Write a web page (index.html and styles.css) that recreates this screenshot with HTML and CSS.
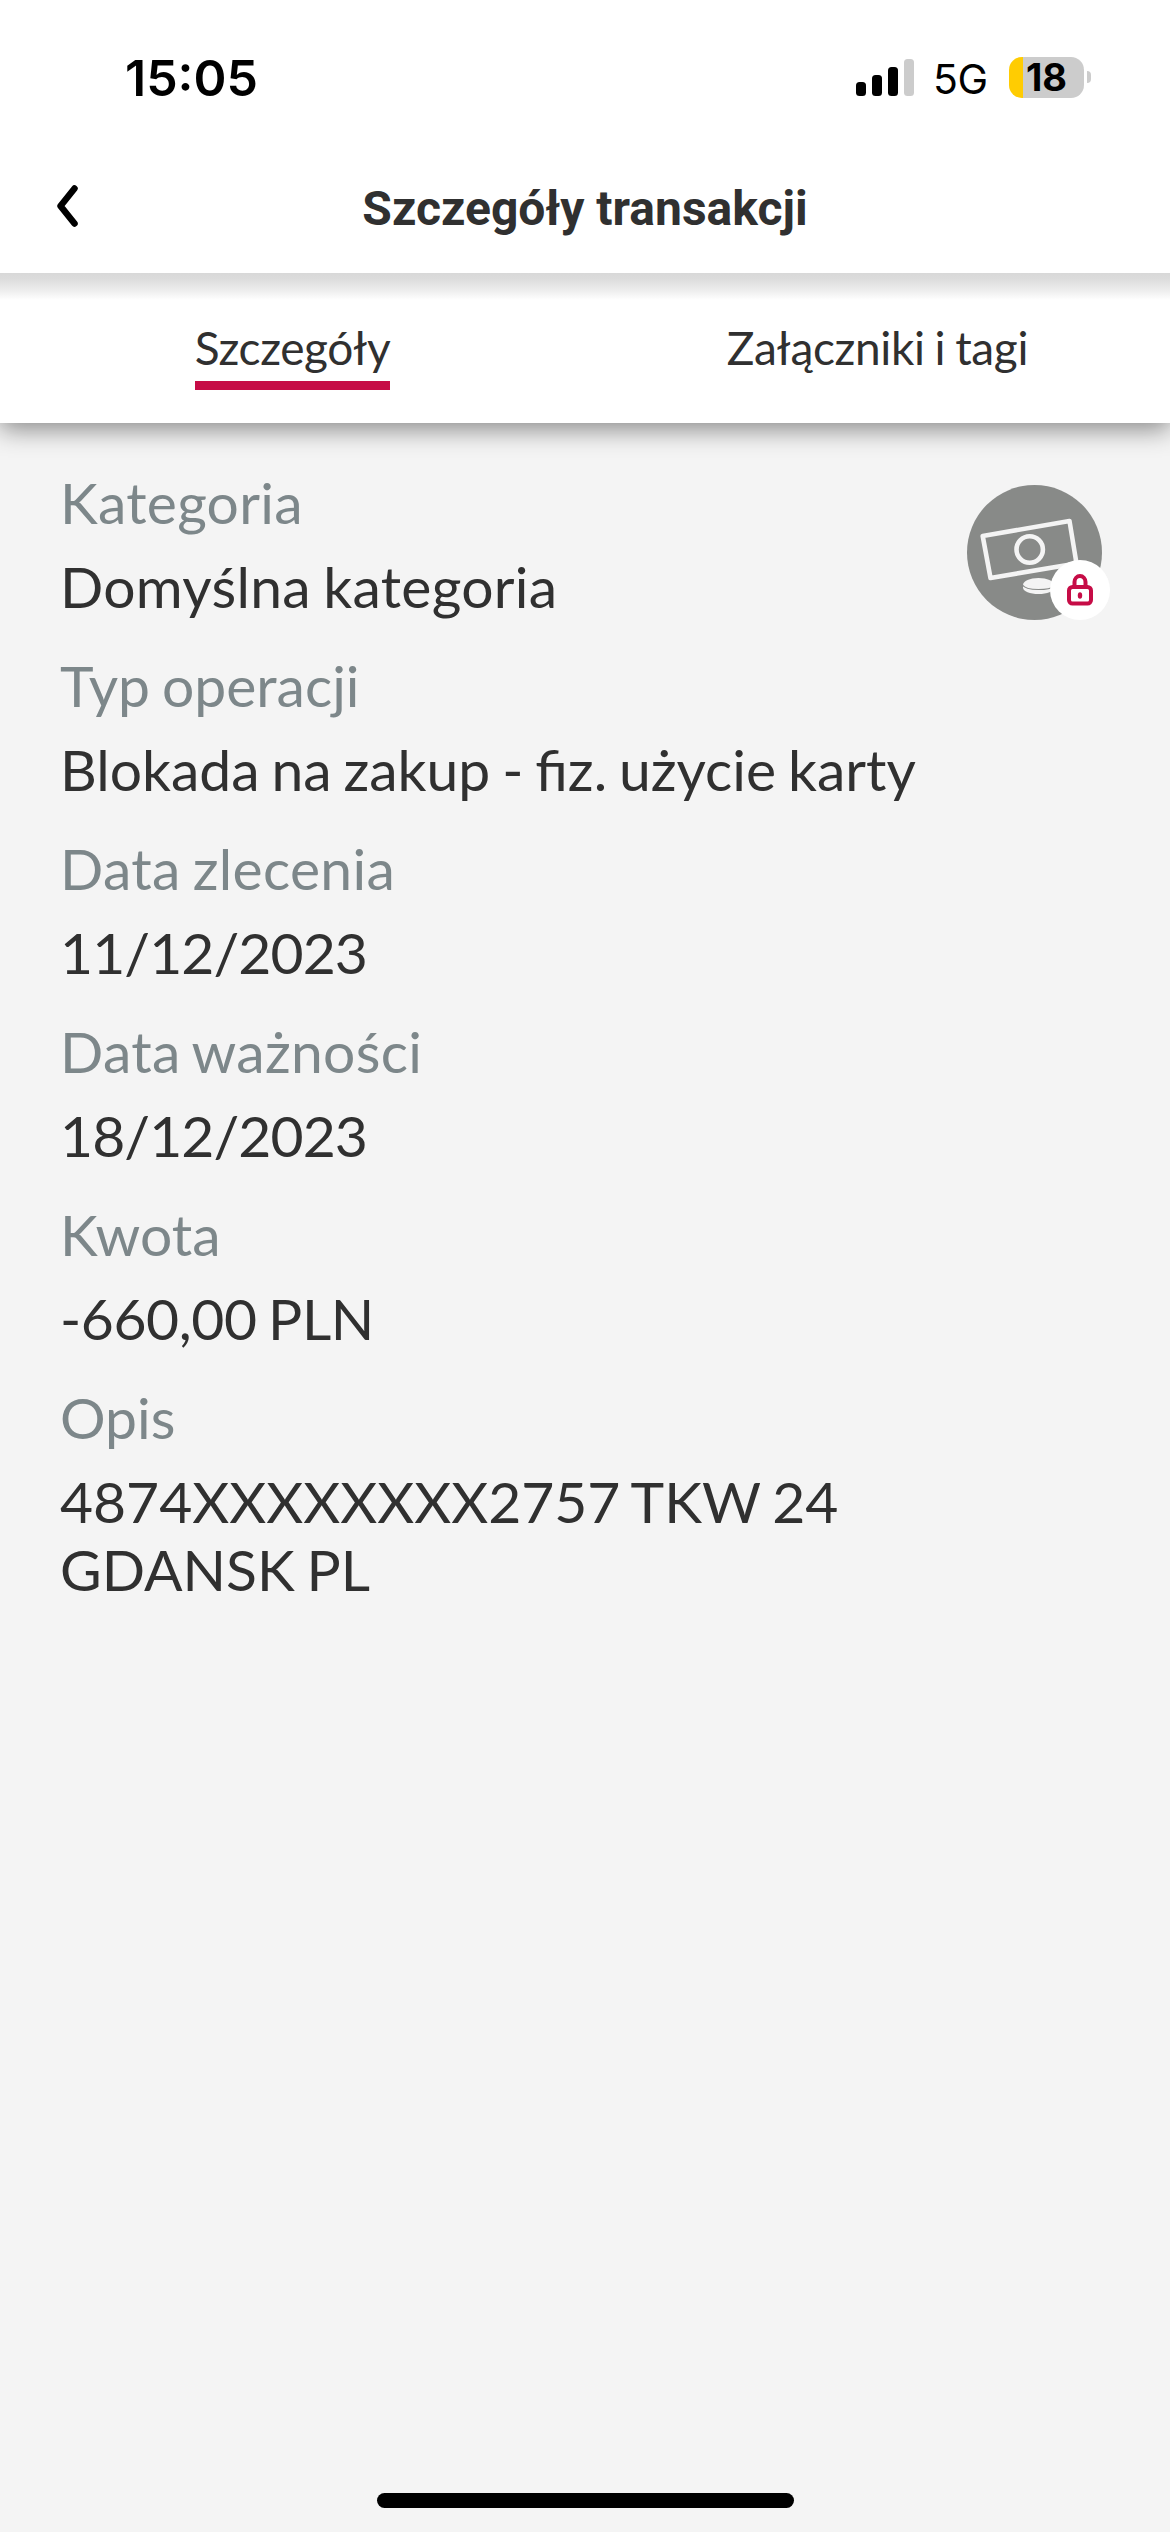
FILE: index.html
```html
<!DOCTYPE html>
<html lang="pl">
<head>
<meta charset="utf-8">
<title>Szczegóły transakcji</title>
<link rel="stylesheet" href="styles.css">
</head>
<body>
<div class="status-bar">
  <span class="time">15:05</span>
  <div class="indicators">
    <svg class="signal" width="58" height="37" viewBox="0 0 58 37">
      <rect x="0" y="23" width="10" height="14" rx="3.5"/>
      <rect x="16" y="16" width="10" height="21" rx="3.5"/>
      <rect x="32" y="8" width="10" height="29" rx="3.5"/>
      <rect x="48" y="0" width="10" height="37" rx="3.5" fill="#ccc"/>
    </svg>
    <span class="network">5G</span>
    <div class="battery"><span class="battery-level">18</span></div>
    <span class="battery-tip"></span>
  </div>
</div>
<header class="header">
  <svg class="back" width="24" height="44" viewBox="0 0 24 44">
    <path d="M19.5 4.5 5.5 22l14 17.500" fill="none" stroke="#000" stroke-width="6.500" stroke-linecap="round" stroke-linejoin="round"/>
  </svg>
  <h1 class="title">Szczegóły transakcji</h1>
</header>
<nav class="tabs">
  <div class="tab"><span class="tab-label active">Szczegóły</span></div>
  <div class="tab"><span class="tab-label">Załączniki i tagi</span></div>
</nav>
<main class="content">
  <dl class="details">
    <div class="row"><dt class="loose">Kategoria</dt><dd class="loose">Domyślna kategoria</dd></div>
    <div class="row"><dt>Typ operacji</dt><dd>Blokada na zakup - fiz. użycie karty</dd></div>
    <div class="row"><dt class="loose">Data zlecenia</dt><dd class="numeric">11/12/2023</dd></div>
    <div class="row"><dt class="loose">Data ważności</dt><dd class="numeric">18/12/2023</dd></div>
    <div class="row"><dt>Kwota</dt><dd class="amount">-660,00 PLN</dd></div>
    <div class="row"><dt>Opis</dt><dd>4874XXXXXXXX2757 TKW 24 GDANSK PL</dd></div>
  </dl>
  <svg class="category" width="143" height="135" viewBox="0 0 143 135">
    <circle cx="67.500" cy="67.500" r="67.500" fill="#888a88"/>
    <g fill="none" stroke="#f4f4f4" stroke-width="4.600" stroke-linejoin="round">
      <path d="M15.700 51 102.500 36l7 42.500L23.500 93z"/>
      <circle cx="62.700" cy="64.500" r="13.200"/>
    </g>
    <path d="M56 100c0-4 7-7 15.500-7S87 96 87 100v2.500c0 4-7 6.500-15.500 6.500S56 106.500 56 102.500z" fill="#f4f4f4"/>
    <path d="M55.500 100c2 3.500 8 4.500 16 4.500s13-1 16-3" fill="none" stroke="#888a88" stroke-width="1.200"/>
    <circle cx="113" cy="105" r="30" fill="#fff"/>
    <g fill="none" stroke="#c60c46" stroke-width="4">
      <rect x="102" y="102" width="22" height="16.500" rx="3.500"/>
      <path d="M107.500 102v-5a5.500 6 0 0 1 11 0v5"/>
    </g>
    <ellipse cx="113" cy="110.500" rx="2.200" ry="3.200" fill="#c60c46"/>
  </svg>
</main>
<footer class="home"><span class="home-indicator"></span></footer>
</body>
</html>
```
FILE: styles.css
```css
* { box-sizing: border-box; }
body {
  margin: 0;
  width: 1170px;
  height: 2532px;
  display: flex;
  flex-direction: column;
  background: #f4f4f4;
  color: #303030;
  font-family: Lato, "Open Sans", sans-serif;
}
.status-bar {
  height: 141px;
  padding: 0 79px 0 125px;
  display: flex;
  justify-content: space-between;
  background: #fff;
  color: #000;
  font-family: Inter, sans-serif;
}
.time {
  margin-top: 48px;
  font-size: 50px;
  line-height: 60px;
  font-weight: 600;
}
.indicators { display: flex; align-items: flex-start; }
.signal { margin-top: 59px; }
.network {
  width: 95px;
  padding-left: 19px;
  margin-top: 54px;
  font-size: 41px;
  line-height: 50px;
  letter-spacing: -0.5px;
}
.battery {
  width: 75px;
  height: 41px;
  margin-top: 57px;
  border-radius: 13px;
  background: linear-gradient(90deg, #ffcc02 14px, #ccc 14px);
  text-align: center;
}
.battery-level {
  display: block;
  font-size: 38px;
  line-height: 41px;
  font-weight: 700;
}
.battery-tip {
  width: 4px;
  height: 12px;
  margin: 71px 0 0 3px;
  border-radius: 0 4px 4px 0;
  background: #ccc;
}
.header {
  position: relative;
  z-index: 1;
  height: 132px;
  padding: 0 55px;
  display: grid;
  grid-template-columns: 24px 1fr 24px;
  align-items: start;
  background: #fff;
}
.back { margin-top: 43px; }
.title {
  margin: 39px 0 0;
  font: 700 48px/58px Roboto, sans-serif;
  text-align: center;
}
.tabs {
  height: 150px;
  display: grid;
  grid-template-columns: 1fr 1fr;
  background: linear-gradient(#d8d8d8, #dcdcdc 6px, #f0f0f0 19px, #fff 27px);
  box-shadow: 0 6px 24px rgba(0, 0, 0, .45);
}
.tab { text-align: center; padding-top: 47px; }
.tab-label {
  display: inline-block;
  height: 70px;
  font-size: 46px;
  line-height: 56px;
  letter-spacing: -0.35px;
  word-spacing: -1.500px;
}
.active { border-bottom: 9px solid #c60c46; }
.content {
  flex: 1;
  display: flex;
  align-items: flex-start;
  justify-content: space-between;
  padding: 45px 60px 0;
}
.details {
  margin: 0;
  width: 900px;
  display: flex;
  flex-direction: column;
  gap: 31px;
  font-size: 57px;
  line-height: 68px;
  word-spacing: -2.700px;
}
.row { display: flex; flex-direction: column; gap: 16px; }
dt { color: #7d878a; }
dd { margin: 0; }
.loose { letter-spacing: 0.3px; }
.numeric { letter-spacing: -0.9px; }
.amount { letter-spacing: -0.4px; }
.category { margin-top: 17px; flex: none; }
.home { height: 39px; display: flex; justify-content: center; }
.home-indicator { width: 417px; height: 15px; border-radius: 8px; background: #000; }
```
